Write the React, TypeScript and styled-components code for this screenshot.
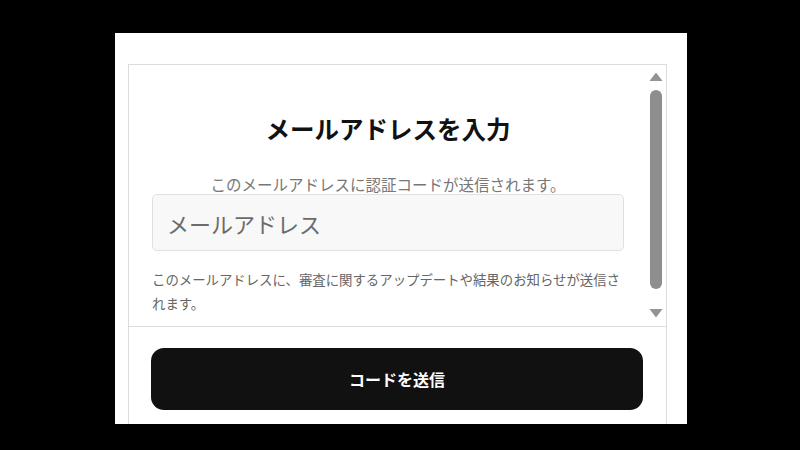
import React from "react";
import styled, { createGlobalStyle } from "styled-components";

const GlobalStyle = createGlobalStyle`
  html, body {
    margin: 0;
    padding: 0;
    background: #000;
  }
  body {
    font-family: "Noto Sans CJK JP", "Noto Sans", sans-serif;
    overflow: hidden;
  }
  * { box-sizing: border-box; }
`;

const Panel = styled.div`
  margin: 33px 0 0 115px;
  width: 572px;
  height: 391px;
  background: #fff;
  overflow: hidden;
  padding: 31px 20px 0 13px;
`;

const Box = styled.div`
  border: 1px solid #dcdcdc;
  border-bottom: none;
  height: 420px;
  display: flex;
  flex-direction: column;
`;

const ScrollRow = styled.div`
  display: flex;
  height: 262px;
  border-bottom: 1px solid #dcdcdc;
`;

const ScrollContent = styled.div`
  flex: 1;
  overflow: hidden;
  padding: 48px 25px 0 23px;
  display: flex;
  flex-direction: column;
`;

const Title = styled.h1`
  margin: 0;
  font-size: 24.5px;
  line-height: 32px;
  font-weight: 700;
  color: #111;
  text-align: center;
`;

const Subtitle = styled.p`
  margin: 32px 0 0;
  font-size: 15.5px;
  line-height: 14px;
  color: #777;
  text-align: center;
`;

const EmailInput = styled.input`
  display: block;
  width: 100%;
  height: 57px;
  margin: 3px 0 0;
  padding: 0 14px;
  background: #f8f8f8;
  border: 1px solid #e0e0e0;
  border-radius: 5px;
  font-family: inherit;
  font-size: 22px;
  color: #222;
  outline: none;
  &::placeholder {
    color: #6b6b6b;
  }
`;

const Helper = styled.p`
  margin: 16px 0 0;
  font-size: 13.4px;
  line-height: 24px;
  color: #666;
`;

const Scrollbar = styled.div`
  width: 17px;
  padding: 7px 3px 8px 0;
  display: flex;
  flex-direction: column;
  align-items: center;
`;

const Thumb = styled.div`
  width: 12px;
  height: 199px;
  margin: 9px 0 20px;
  border-radius: 6px;
  background: #8e8e8e;
`;

const Arrow = styled.svg`
  display: block;
  flex: none;
`;

const Footer = styled.div`
  padding: 21px 23px 0 22px;
`;

const SendButton = styled.button`
  display: block;
  width: 100%;
  height: 62px;
  border: none;
  border-radius: 13px;
  background: #111;
  color: #fff;
  font-family: inherit;
  font-size: 16px;
  font-weight: 700;
  cursor: pointer;
`;

const UpArrow = () => (
  <Arrow width="14" height="9" viewBox="0 0 14 9">
    <polygon points="7,0.5 13.5,9 0.5,9" fill="#939393" />
  </Arrow>
);

const DownArrow = () => (
  <Arrow width="14" height="9" viewBox="0 0 14 9">
    <polygon points="0.5,0 13.5,0 7,8.5" fill="#939393" />
  </Arrow>
);

export default function App() {
  return (
    <>
      <GlobalStyle />
      <Panel>
        <Box>
          <ScrollRow>
            <ScrollContent>
              <Title>メールアドレスを入力</Title>
              <Subtitle>このメールアドレスに認証コードが送信されます。</Subtitle>
              <EmailInput type="email" placeholder="メールアドレス" />
              <Helper>
                このメールアドレスに、審査に関するアップデートや結果のお知らせが送信されます。
              </Helper>
            </ScrollContent>
            <Scrollbar>
              <UpArrow />
              <Thumb />
              <DownArrow />
            </Scrollbar>
          </ScrollRow>
          <Footer>
            <SendButton type="button">コードを送信</SendButton>
          </Footer>
        </Box>
      </Panel>
    </>
  );
}
